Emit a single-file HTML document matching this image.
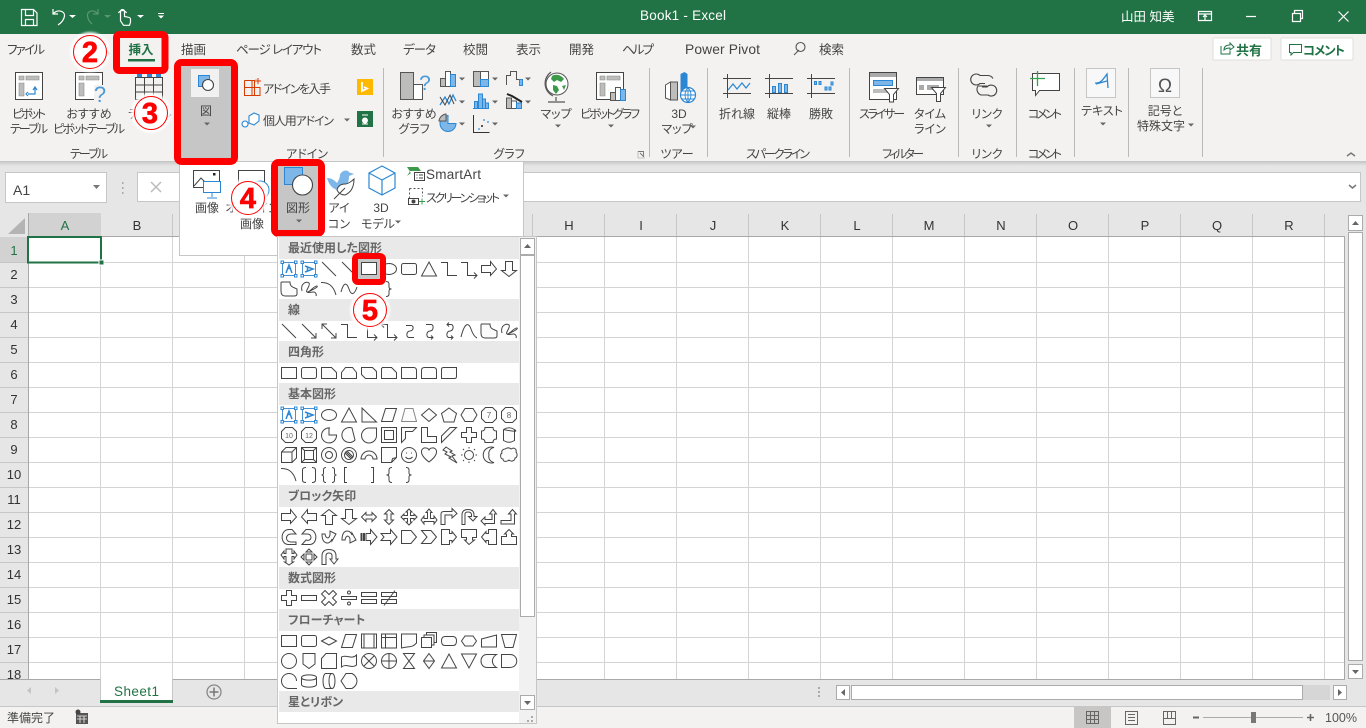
<!DOCTYPE html>
<html lang="ja"><head><meta charset="utf-8"><title>Book1 - Excel</title>
<style>
html,body{margin:0;padding:0;width:1366px;height:728px;overflow:hidden;background:#e6e6e6}
svg{display:block;font-family:"Liberation Sans","Noto Sans CJK JP",sans-serif;font-feature-settings:"palt"}
text{font-size:12px;fill:#444}
.m{text-anchor:middle}
.tab{font-size:12.5px}
.hd{font-size:12px;font-weight:bold;fill:#666}
.col{font-size:13px;fill:#333;text-anchor:middle}
.row{font-size:13px;fill:#333;text-anchor:middle}
.s path,.s use{fill:#fcfcfc;stroke:#444;stroke-width:1}
.n{fill:none!important}
.num{font-size:29px;font-weight:bold;fill:#f00;stroke:#f00;stroke-width:.7;text-anchor:middle}
</style></head><body>
<svg width="1366" height="728" viewBox="0 0 1366 728" xmlns="http://www.w3.org/2000/svg">
<defs>
<linearGradient id="sh" x1="0" y1="0" x2="0" y2="1"><stop offset="0" stop-color="#c4c4c4"/><stop offset="1" stop-color="#e6e6e6"/></linearGradient>
<filter id="gl" x="-30%" y="-30%" width="160%" height="160%"><feGaussianBlur stdDeviation="1"/></filter>
<path id="da" d="M-3-1.5h6l-3 3z" fill="#666"/>
<g id="tb"><path d="M-6.500-6.500h13v13h-13z" fill="#fff" stroke="#4a90d0"/><path d="M-8-8h2.500v2.500h-2.500zM5.500-8h2.500v2.500h-2.500zM-8 5.500h2.500v2.500h-2.500zM5.500 5.500h2.500v2.500h-2.500z" fill="#fff" stroke="#2b87d3"/><path d="M-3 4L0-4l3 8M-2-.5h4" fill="none" stroke="#2b87d3" stroke-width="1.500"/></g>
<g id="tv"><path d="M-6.500-6.500h13v13h-13z" fill="#fff" stroke="#4a90d0"/><path d="M-8-8h2.500v2.500h-2.500zM5.500-8h2.500v2.500h-2.500zM-8 5.500h2.500v2.500h-2.500zM5.500 5.500h2.500v2.500h-2.500z" fill="#fff" stroke="#2b87d3"/><path d="M-4-3L4 0-4 3M-1.500-2v4" fill="none" stroke="#2b87d3" stroke-width="1.500"/></g>
<path id="ln" d="M-7-7L7 7" fill="none"/>
<path id="la" d="M-7-7L7 7M2 7h5V2" fill="none"/>
<path id="ld" d="M-7-7L7 7M2 7h5V2M-2-7h-5v5" fill="none"/>
<path id="el" d="M-8-6.500h6.500v13H8" fill="none"/>
<path id="ea" d="M-8-6.500h6.500v13H8M5 3.500l3 3-3 3" fill="none"/>
<path id="ed" d="M-8-6.500h6.500v13H8M5 3.500l3 3-3 3M-5-9.500l-3 3 3 3" fill="none"/>
<path id="cc" d="M-3-5.500H2C5-5.500 5-.5 1 0-3 .5-3 6.500 0 6.500H5" fill="none"/>
<path id="ca" d="M-3-6.500H2C5-6.500 5-.5 1 0-3 .5-3 6.500 0 6.500H4M2 4.500l2 2-2 2" fill="none"/>
<path id="cd" d="M-2-6.500H2C5-6.500 5-.5 1 0-3 .5-3 6.500 0 6.500H4M2 4.500l2 2-2 2M0-8.500l-2 2 2 2" fill="none"/>
<path id="cv" d="M-8 6C-4-10 0-8 2-2S6 6 8 7" fill="none"/>
<path id="ff" d="M-7-7H1C1-2 4-2 8 0V5C8 7 6 7 5 7H-4C-7 7-8 5-8 2V-5C-8-7-8-7-7-7z"/>
<path id="sc" d="M-7 2C-9-6-2-8 0-6S-4 2-2 3 6-4 8-3 1 2-1 3 4 3 5 3 8 5 7 7" fill="none"/>
<path id="ar" d="M-8-6.500C-2-6.500 4-5 7 6" fill="none"/>
<path id="wv" d="M-8 3C-5-8-2-6 0 0S5 7 8-2" fill="none"/>
<path id="rc" d="M-7.500-5.500h15v11h-15z"/>
<path id="rr" d="M-5.500-5.500h11a2 2 0 0 1 2 2v7a2 2 0 0 1-2 2h-11a2 2 0 0 1-2-2v-7a2 2 0 0 1 2-2z"/>
<path id="s1" d="M-7.500-5.500h10l5 5v6h-15z"/>
<path id="s2" d="M-3.500-5.500h7l4 5v6h-15v-6z"/>
<path id="s3" d="M-7.500-5.500h11l4 4v7h-11l-4-4z"/>
<path id="s4" d="M-6.500-5.500h9l5 5v6h-15v-10z"/>
<path id="r1" d="M-7.500-5.500h12q3 0 3 3v8h-15z"/>
<path id="r2" d="M-4.500-5.500h9q3 0 3 3v8h-15v-8q0-3 3-3z"/>
<path id="r3" d="M-5.500-5.500h13v9q0 2-2 2h-13v-9q0-2 2-2z"/>
<ellipse id="ov" cx="0" cy="0" rx="7.500" ry="5.500"/>
<path id="tr" d="M0-7L7.500 7h-15z"/>
<path id="rt" d="M-7-7L7.500 7H-7z"/>
<path id="pa" d="M-3.500-6.500h11L3.500 6.500h-11z"/>
<path id="tz" d="M-4-6.500h8l3.500 13h-15z" style="stroke:#888"/>
<path id="di" d="M0-6.500L7.500 0 0 6.500-7.500 0z"/>
<path id="pe" d="M0-7L7.500-1.500 5 7H-5L-7.500-1.500z"/>
<path id="he" d="M-4-6.500h8L8 0 4 6.500h-8L-8 0z"/>
<path id="oc" d="M-3.500-7.500h7l4 4v7l-4 4h-7l-4-4v-7z"/>
<path id="pi" d="M1-7A7.500 7.500 0 1 0 7.500 0H0V-7z"/>
<path id="ch" d="M3-7A7.500 7.500 0 1 0 6 5z"/>
<path id="td" d="M0-7H7.500V0A7.500 7.500 0 1 1 0-7z"/>
<path id="fr" d="M-7.500-7.500h15v15h-15zM-4.500-4.500v9h9v-9z"/>
<path id="hf" d="M-7.500-7.500h15l-4 4h-7v7l-4 4z"/>
<path id="lo" d="M-7.500-7.500h6v9h9v6h-15z"/>
<path id="dg" d="M-7.500 1L1-7.500h6.500L-7.500 7.500z"/>
<path id="pl" d="M-2.500-7.500h5v5h5v5h-5v5h-5v-5h-5v-5h5z"/>
<path id="pq" d="M-4-7.500h8q0 3.500 3.500 3.500v8q-3.500 0-3.500 3.500h-8q0-3.500-3.500-3.500v-8q3.500 0 3.500-3.500z"/>
<path id="cn" d="M-5.500-5.500V5.500Q0 9 5.500 5.500V-5.500M-5.500-5.500Q0-9 5.500-5.500T-5.500-5.500"/>
<path id="cu" d="M-7.500-3L-3-7.500h10.500V3L3 7.500H-7.500zM-7.500-3H3V7.500M3-3L7.500-7.500"/>
<path id="bv" d="M-7.500-7.500h15v15h-15zM-4.500-4.500h9v9h-9zM-7.500-7.500l3 3M7.500-7.500l-3 3M-7.500 7.500l3-3M7.500 7.500l-3-3"/>
<path id="dn" d="M7.500 0A7.500 7.500 0 1 1-7.500 0 7.500 7.500 0 1 1 7.500 0zM3.500 0A3.500 3.500 0 1 0-3.500 0 3.500 3.500 0 1 0 3.500 0z"/>
<path id="ns" d="M7.500 0A7.500 7.500 0 1 1-7.500 0 7.500 7.500 0 1 1 7.500 0zM4.500 0A4.500 4.500 0 1 0-4.500 0 4.500 4.500 0 1 0 4.500 0zM-3-3L3 3M-2-4L4 2M-4-2L2 4"/>
<path id="ba" d="M-8 4A8 8 0 0 1 8 4H4A4 4 0 0 0-4 4z"/>
<path id="fc" d="M-7.500-7.500h15v10l-5 5h-10zM2.500 7.500l1-4 4-1"/>
<path id="sm" d="M7.500 0A7.500 7.500 0 1 1-7.500 0 7.500 7.500 0 1 1 7.500 0zM-3-2h1M2-2h1M-3.500 2Q0 5.500 3.500 2"/>
<path id="ht" d="M0 7C-12-2-7-8-3-7-1-7 0-5 0-5S1-7 3-7C7-8 12-2 0 7z"/>
<path id="lt" d="M-3-8L3-4 1-3l5 3-3 1 5 7-8-5 2-1-6-3 2-2-4-2z"/>
<path id="su" d="M4.500 0A4.500 4.500 0 1 1-4.500 0 4.500 4.500 0 1 1 4.500 0zM0-8v1.500M0 6.500V8M-8 0h1.500M6.500 0H8M-6-6l1 1M5 5l1 1M6-6L5-5M-5 5l-1 1"/>
<path id="mo" d="M5-7.500A8 8 0 1 0 5 7.500 6 6 0 0 1 0 0 6 6 0 0 1 5-7.500z"/>
<path id="cl" d="M-4-6C-1-8 1-7 2-6 5-8 8-6 7-3 9-1 8 3 6 3 6 6 2 7 0 5-2 7-6 7-6 4-9 4-9-1-7-2-8-4-6-6-4-6z"/>
<path id="bp" d="M-3-7.500Q-6.500-7.500-6.500-5V5Q-6.500 7.500-3 7.500M3-7.500Q6.500-7.500 6.500-5V5Q6.500 7.500 3 7.500" fill="none"/>
<path id="bc" d="M-3-7.500Q-5.500-7.500-5.500-5V-2Q-5.500 0-7.500 0-5.500 0-5.500 2V5Q-5.500 7.500-3 7.500M3-7.500Q5.500-7.500 5.500-5V-2Q5.500 0 7.500 0 5.500 0 5.500 2V5Q5.500 7.500 3 7.500" fill="none"/>
<path id="lb" d="M-2-7.500H-4.500V7.500H-2" fill="none"/>
<path id="rb" d="M2-7.500H4.500V7.500H2" fill="none"/>
<path id="lc" d="M3-7.500Q0-7.500 0-5V-2Q0 0-2.500 0 0 0 0 2V5Q0 7.500 3 7.500" fill="none"/>
<path id="rs" d="M-3-7.500Q0-7.500 0-5V-2Q0 0 2.500 0 0 0 0 2V5Q0 7.500-3 7.500" fill="none"/>
<path id="ax" d="M-7.500-3.500h9v-4L7.500 0l-6 6.500v-3h-9z"/>
<path id="al" d="M7.500-3.500h-9v-4L-7.500 0l6 6.500v-3h9z"/>
<path id="au" d="M-3.500 7.500v-9h-4L0-7.500l7.500 6h-4v9z"/>
<path id="ad" d="M-3.500-7.500h7v9h4L0 7.500l-7.500-6h4z"/>
<path id="lr" d="M-7.500 0L-3-4.500v2.500h6v-2.500L7.500 0 3 4.500V2h-6v2.500z"/>
<path id="ud" d="M0-7.500L4.500-3H2v6h2.500L0 7.500-4.500 3H-2v-6h-2.500z"/>
<path id="qa" d="M0-8L3-5H1.500v3.500H5V-3l3 3-3 3V1.500H1.500V5H3L0 8-3 5h1.500V1.500H-5V3L-8 0l3-3v1.500h3.500V-5H-3z"/>
<path id="lu" d="M0-8L3-4.500H1.500V1.500H5V-1L8 3 5 7V4.500H-5V7L-8 3l3-4V1.500h3.500v-6H-3z"/>
<path id="be" d="M-8 7.500V-3q0-2.500 3-2.500H3v-3L8-3.500 3 1V-2H-4V7.500z"/>
<path id="ut" d="M-7 7.500V-2q0-5.500 6-5.500 6 0 6 5.500v1.500h3L4 4-.5-.5h3V-2q0-3-3.500-3T-4-2v9.500z"/>
<path id="lf" d="M-8 4L-4 0v2.500H3V-3H.5L4-7.500 7.500-3H5.500V6.500H-4V8z"/>
<path id="bu" d="M-8 3.500H2V-3H-.5L3.500-7.500 7.500-3H5.500V7H-8z"/>
<path id="c1" d="M3-7.500H0C-9-7.500-9 7-1 7.500H7V5L2 5C-4 5-4-3 2-3H7z"/>
<path id="c2" d="M-3-7.500H0C9-7.500 9 7 1 7.500H-7L-3 3C3 5 4-3-2-3H-7z"/>
<path id="c3" d="M-7-3C-7 8 1 8 3 2V4L7-3 1-6V-2C0 2-3 2-4-3z"/>
<path id="c4" d="M-7 3C-7-8 1-8 3-2V-4L7 3 1 6V2C0-2-3-2-4 3z"/>
<path id="st" d="M-8-3.500h1v7h-1zM-5.500-3.500h1v7h-1zM-3-3.500H1.500v-4L8 0 1.500 7.500v-4H-3z"/>
<path id="no" d="M-8-3.500H1.500v-4L8 0 1.500 7.500v-4H-8L-5 0z"/>
<path id="pn" d="M-7.500-6.500H2L7.500 0 2 6.500H-7.500z"/>
<path id="cv2" d="M-7.500-6.500H2L7.500 0 2 6.500H-7.500L-2 0z"/>
<path id="rk" d="M-7.500-7.500h8v4H3v-2L7.500 0 3 5.500v-2H.5v4h-8z"/>
<path id="dk" d="M-7.500-7.500h15v8h-4V3h2L0 7.500-4.500 3h2V.5h-5z"/>
<path id="lk" d="M7.500-7.500h-8v4H-3v-2L-7.500 0-3 5.500v-2H-.5v4h8z"/>
<path id="uk" d="M-7.500 7.500v-8h5V-3h-2L0-7.500 4.500-3h-2V-.5h5v8z"/>
<path id="uc" d="M-3-8h6v4.500H5V-6L8-2 5 2V-.5H3V5H4.500L0 8-4.500 5H-3V-.5H-5V2L-8-2-5-6v2.500h2z"/>
<path id="qc" d="M-3-3h6v6h-6zM0-8l3 3H-3zM0 8l3-3H-3zM-8 0l3-3V3zM8 0L5-3V3z"/>
<path id="ci" d="M-7 7.500V-1q0-6.500 7-6.500T7-1V2h2L5 7 1 2h2V-1q0-3-3-3t-3 3v8.500z"/>
<path id="mn" d="M-7.500-2.500h15v5h-15z"/>
<path id="mx" d="M-4-7.500L0-3.500 4-7.500 7.500-4 3.500 0 7.500 4 4 7.500 0 3.500-4 7.500-7.500 4-3.500 0-7.500-4z"/>
<path id="dv" d="M-7.500-1.500h15v3h-15zM1.500-5.500a1.500 1.500 0 1 1-3 0 1.500 1.500 0 1 1 3 0zM1.500 5.500a1.500 1.500 0 1 1-3 0 1.500 1.500 0 1 1 3 0z"/>
<path id="eq" d="M-7.500-5.500h15v4h-15zM-7.500 1.500h15v4h-15z"/>
<path id="ne" d="M-7.500-5.500h15v4h-15zM-7.500 1.500h15v4h-15zM-5 7.500L6-7.500"/>
<path id="fp" d="M-7.500-5.500h15v11h-15z"/>
<path id="fd" d="M-7.500 0L0-4 7.500 0 0 4z"/>
<path id="fq" d="M-7.500-7h15v14h-15zM-5-7V7M5-7V7"/>
<path id="fi" d="M-7.500-7h15v14h-15zM-7.500-3.500h15M-3.500-7V7"/>
<path id="fo" d="M-7.500-7h15V2C3 7 1 5-7.500 7z"/>
<path id="fm" d="M-7.500-3.500h10v10h-10zM-5-3.500V-6H5V4H2.500M-2.500-6V-8.500h10v10H5"/>
<path id="fe" d="M-4-4.500h8q3.500 0 3.500 4.500T4 4.500h-8q-3.500 0-3.500-4.500T-4-4.500z"/>
<path id="fh" d="M-4-5h8L7.500 0 4 5h-8L-7.500 0z"/>
<path id="fn" d="M-7.500-2L7.500-6V6h-15z"/>
<path id="fu" d="M-7.500-6.500h15L4 6.500h-8z"/>
<path id="fc2" d="M7.500 0A7.500 7.500 0 1 1-7.500 0 7.500 7.500 0 1 1 7.500 0z"/>
<path id="fs" d="M-6-7.500H6V3L0 7.500-6 3z"/>
<path id="fk" d="M-3-7.500h10.500v15h-15v-10z"/>
<path id="ft" d="M-7.500-4C-3-7 3-1 7.500-6V4C3 8-3 2-7.500 6z"/>
<path id="fx" d="M7.500 0A7.500 7.500 0 1 1-7.500 0 7.500 7.500 0 1 1 7.500 0zM-5-5L5 5M5-5L-5 5"/>
<path id="fy" d="M7.500 0A7.500 7.500 0 1 1-7.500 0 7.500 7.500 0 1 1 7.500 0zM-7.500 0h15M0-7.500v15"/>
<path id="fa" d="M-5.500-7.500h11L-5.500 7.500h11z"/>
<path id="fb" d="M0-7.500L5.500 0 0 7.500-5.500 0zM-5.500 0h11"/>
<path id="fw" d="M-7.500 7L0-7 7.500 7z"/>
<path id="fv" d="M-7.500-7L0 7 7.500-7z"/>
<path id="fl" d="M7.500-6.500H-2C-10-6.500-10 6.500-2 6.500H7.500C2 3 2-3 7.500-6.500z"/>
<path id="fg" d="M-7.500-6.500H1C10-6.500 10 6.500 1 6.500H-7.500z"/>
<path id="fj" d="M7.500 0A7.500 7.500 0 1 0 0 7.500H8"/>
<path id="fz" d="M-7.500-3.500C-7.500-7 7.500-7 7.500-3.500V3.500C7.500 7-7.500 7-7.500 3.500zM-7.500-3.500C-7.500 0 7.500 0 7.500-3.500"/>
<path id="f3" d="M-3-7.500H3C7-7.500 7 7.500 3 7.500H-3C-7 7.500-7-7.500-3-7.500zM3-7.500C-1-7.500-1 7.500 3 7.500"/>
<path id="f4" d="M-3-7.500H3C6-6 8-3 8 0S6 6 3 7.500H-3L-8 0z"/>
</defs>

<!-- base -->
<rect width="1366" height="728" fill="#e6e6e6"/>
<rect width="1366" height="34" fill="#217346"/>
<rect y="34" width="1366" height="127" fill="#f3f2f1"/>
<rect y="161" width="1366" height="5" fill="url(#sh)"/>

<!-- title bar -->
<g fill="none" stroke="#fff" stroke-width="1.200">
<path d="M21.500 9.500h12l3.500 3.500v12.500h-15.500z"/><path d="M25.500 9.500v6h8v-6M25.500 25.500v-6h8v6" />
<path d="M53 9v5h5M53.500 13.500C58 9 65 11 64.500 16 64 20 61 23 58 25"/>
<path d="M98 9v5h-5M97.500 13.500C93 9 87 11 87.500 16 88 20 90 22 92 24" stroke="#5d9576"/>
<path d="M120.500 20v-8.500a2 2 0 0 1 4 0v5l4 .8a2 2 0 0 1 2 2v3l-1 3h-6l-3-4.500zM118.500 13a4.500 4.500 0 0 1 8 0"/>
<path d="M1198.500 11.500h13v9h-13zM1198.500 14h13M1205 20v-4M1203 17l2-2 2 2"/>
<path d="M1246 16.500h10M1292.500 13.500h8v8h-8zM1294.500 13v-2.500h8v8H1301"/>
<path d="M1338.500 11.500l10 10M1348.500 11.500l-10 10"/>
</g>
<g fill="#fff"><path d="M69 15h7l-3.500 3zM137 15h7l-3.500 3zM158 13h6v1h-6zM158 15.500h6l-3 3z"/></g><path d="M104 15h7l-3.500 3z" fill="#5d9576"/>
<text x="640" y="20" style="fill:#fff;font-size:13.500px" textLength="86">Book1 - Excel</text>
<text x="1121" y="21" style="fill:#fff;font-size:12.500px">山田 知美</text>

<!-- tabs -->
<g class="tab">
<text x="7" y="54" class="tab" textLength="38">ファイル</text><text x="72" y="54" class="tab" textLength="38">ホーム</text>
<text x="141" y="54" class="tab m" style="font-weight:bold;fill:#217346">挿入</text>
<text x="181" y="54" class="tab">描画</text><text x="236" y="54" class="tab" textLength="86">ページ レイアウト</text>
<text x="351" y="54" class="tab">数式</text><text x="403" y="54" class="tab" textLength="33">データ</text><text x="463" y="54" class="tab">校閲</text><text x="516" y="54" class="tab">表示</text><text x="569" y="54" class="tab">開発</text><text x="622" y="54" class="tab" textLength="32">ヘルプ</text>
<text x="685" y="54" class="tab" style="font-size:13.800px" textLength="75">Power Pivot</text><text x="819" y="54" class="tab">検索</text>
</g>
<path d="M128 59h27v2.500h-27z" fill="#217346"/>
<path d="M794 54l5-5M805 46a4.500 4.500 0 1 1-9 0 4.500 4.500 0 1 1 9 0z" fill="none" stroke="#555" stroke-width="1.100" transform="translate(0 1)"/>
<!-- share buttons -->
<rect x="1213" y="38" width="58" height="22" rx="1" fill="#fff" stroke="#e1dfdd"/>
<rect x="1281" y="38" width="72" height="22" rx="1" fill="#fff" stroke="#e1dfdd"/>
<path d="M1221 46v8h9v-3M1224 50c0-4 3-5 6-5v-2l4 4-4 3v-2c-3 0-5 1-6 2z" fill="none" stroke="#217346"/>
<path d="M1289.500 44.500h12v8h-8l-2.500 2.500v-2.500h-1.500z" fill="none" stroke="#217346"/>
<text x="1236" y="55" style="font-size:13px;font-weight:bold;fill:#217346">共有</text>
<text x="1303" y="55" style="font-size:12.500px;font-weight:bold;fill:#217346" textLength="42">コメント</text>

<!-- separators -->
<path d="M383.500 68v89M649.500 68v89M707.500 68v89M849.500 68v89M958.500 68v89M1016.500 68v89M1074.500 68v89M1128.500 68v89M1202.500 68v89" stroke="#b9b9b9"/>

<!-- ribbon: table -->
<g fill="none" stroke="#444">
<path d="M15.500 72.500h27v27h-27z" fill="#fff"/>
<path d="M75.500 72.500h27v27h-27z" fill="#fff"/>
<path d="M135.500 77.500h27v22h-27zM135.500 85h27M135.500 92h27M144.500 77v22M153.500 77v22"/>
</g>
<path d="M19 76h5v4h-5zM26 76h13v4H26zM19 83h5v13h-5zM79 76h5v4h-5zM86 76h13v4H86zM79 83h5v13h-5z" fill="#bdbdbb" stroke="#8a8a8a" stroke-width=".6"/>
<path d="M28 94h7v-6M33 90l2-3 2 3M28 92l-2 2 2 2" fill="none" stroke="#2b87d3" stroke-width="1.200"/>
<rect x="94" y="85" width="12" height="18" fill="#f3f2f1"/>
<text x="100" y="102" style="font-size:22px;fill:#4a9ad8" class="m">?</text>
<path d="M137 74h5v3h-5zM147 74h5v3h-5zM156 74h5v3h-5z" fill="#2b87d3"/>
<text x="29" y="118" class="m" textLength="34">ピボット</text><text x="29" y="133" class="m" textLength="38">テーブル</text>
<text x="89" y="118" class="m">おすすめ</text><text x="89" y="133" class="m" textLength="72">ピボットテーブル</text>
<text x="150" y="118" class="m">テーブル</text>
<text x="89" y="158" class="m" textLength="38">テーブル</text>

<!-- addins -->
<path d="M244.500 87.500h15.500v8h-15.500zM244.500 80.500h10v15M244.500 80.500v7M252 80.500v15M256 80v-.5" fill="none" stroke="#d83b01"/>
<path d="M255 81h6M258 78v6" stroke="#d83b01" fill="none"/>
<text x="263" y="93" textLength="68">アドインを入手</text>
<rect x="357" y="79" width="16" height="16" fill="#ffb900"/><path d="M362 82v9l5-2.500-3-1.500" fill="none" stroke="#fff" stroke-width="1.800"/>
<path d="M249 116l5-3 5 2v6l-5 4-5-2zM245 121a3 3 0 1 0 .1 0z" fill="#fff" stroke="#2b87d3" stroke-width="1.100"/>
<text x="263" y="125" textLength="71">個人用アドイン</text><use href="#da" x="347" y="120"/>
<rect x="357" y="111" width="16" height="16" fill="#217346"/><path d="M362 115h6M365 118a2.500 2.500 0 1 1-.1 0zM362 124h6" stroke="#fff" fill="#fff"/>
<text x="307" y="158" class="m">アドイン</text>

<!-- charts -->
<path d="M400.500 72.500h13v27h-13z" fill="#bdbdbb" stroke="#555"/><path d="M413.500 84.500h9v15h-9z" fill="#fff" stroke="#555"/>
<text x="425" y="90" class="m" style="font-size:21px;fill:#4a9ad8">?</text>
<text x="414" y="118" class="m">おすすめ</text><text x="414" y="133" class="m">グラフ</text>
<g stroke="#555" stroke-width="1">
<path d="M440.500 78.500h5v8h-5z" fill="#bdbdbb"/><path d="M445.500 71.500h5v15h-5z" fill="#fff"/><path d="M450.500 74.500h5v12h-5z" fill="#7db6e8" stroke="#2b87d3"/>
<path d="M473.500 71.500h7v15h-7z" fill="#bdbdbb"/><path d="M480.500 71.500h8v8h-8z" fill="#fff"/><path d="M480.500 79.500h8v7h-8z" fill="#7db6e8" stroke="#2b87d3"/>
<path d="M506.500 85V75.500h4V71.500h6v8h3" fill="none"/><path d="M519.500 79.500h3v6h-3z" fill="#7db6e8" stroke="#2b87d3"/>
<path d="M440 105l5-8 4 7 4-9 3 6" fill="none" stroke="#2b87d3" stroke-width="1.300"/><path d="M440 97l5 8 5-10 4 9" fill="none" stroke="#444"/>
<path d="M474.500 108.500v-7h3v7zM477.500 108.500v-7M478.500 108V94h4v14M482.500 108v-9h3v9M485.500 108v-5h3v5" fill="#7db6e8" stroke="#2b87d3"/><path d="M473 108.500h16" stroke="#2b87d3"/>
<path d="M506.500 108.500V98h5v10.500z" fill="#bdbdbb"/><path d="M511.500 108.500V101h5v7.500z" fill="#fff"/><path d="M516.500 108.500V103h5v5.500z" fill="#7db6e8" stroke="#2b87d3"/><path d="M507 94l5 2 5 3 5 3" stroke="#222" stroke-width="2" fill="none"/>
<path d="M448 115.500a8 8 0 1 0 8 8h-8z" fill="#7db6e8" stroke="#2b87d3"/><path d="M446 114a8 8 0 0 0-7 7h7z" fill="#bdbdbb"/>
<path d="M473.500 115v17.500h16" fill="none" stroke="#333"/></g>
<path d="M483 119h2v2h-2zM487 121h2v2h-2zM478 128h2v2h-2z" fill="#7db6e8"/><path d="M481 125h2v2h-2z" fill="#555"/>
<use href="#da" x="462" y="79"/><use href="#da" x="495" y="79"/><use href="#da" x="528" y="79"/><use href="#da" x="462" y="102"/><use href="#da" x="495" y="102"/><use href="#da" x="528" y="102"/><use href="#da" x="462" y="124"/><use href="#da" x="495" y="124"/>
<circle cx="557" cy="84" r="11" fill="#fff" stroke="#555"/><path d="M552 76c5-3 10 0 12 3l-3 3-4-2-3 2-3-3zM553 85l4 1 2 4-3 4-3-4zM562 86l4-1-2 5z" fill="#3c9a4a"/>
<path d="M551 72a14 14 0 0 0 2 24M556 97v4M548 102h17" fill="none" stroke="#555" stroke-width="1.200"/>
<text x="556" y="118" class="m">マップ</text><use href="#da" x="558" y="126"/>
<path d="M596.500 72.500h27v27h-27z" fill="#fff" stroke="#444"/><path d="M600 76h5v4h-5zM607 76h13v4h-13zM600 83h5v13h-5z" fill="#bdbdbb" stroke="#888" stroke-width=".6"/>
<path d="M610.500 92.500h5v8h-5z" fill="#bdbdbb" stroke="#555"/><path d="M615.500 87.500h5v13h-5z" fill="#fff" stroke="#555"/><path d="M620.500 89.500h5v11h-5z" fill="#7db6e8" stroke="#2b87d3"/>
<text x="610" y="118" class="m" textLength="60">ピボットグラフ</text><use href="#da" x="611" y="126"/>
<text x="509" y="158" class="m">グラフ</text>
<path d="M638 151.500h5.500v5M640 153l4 4" fill="none" stroke="#777" stroke-width=".9"/><path d="M638 151v7h7" fill="none" stroke="#999" stroke-width=".6"/>

<!-- 3D map -->
<path d="M665.500 85l5-3v18l-5-2z" fill="#fff" stroke="#555"/><path d="M670.500 82h7v18h-7z" fill="#bdbdbb" stroke="#555"/><path d="M680.500 74l4-2 3 2v21h-7z" fill="#2b87d3"/>
<circle cx="688" cy="95" r="7.500" fill="#fff" stroke="#2b87d3" stroke-width="1.200"/><path d="M680.500 95h15M688 87.500v15M682 91h12M682 99h12M688 87.500a11 11 0 0 0 0 15a11 11 0 0 0 0-15" fill="none" stroke="#2b87d3" stroke-width=".9"/>
<text x="679" y="118" class="m">3D</text><text x="677" y="133" class="m">マップ</text><use href="#da" x="693" y="127"/>
<text x="677" y="158" class="m">ツアー</text>

<!-- sparklines -->
<g fill="none" stroke="#444"><path d="M723 78.500h28M723 93.500h28M727.500 74v24M765 78.500h28M765 93.500h28M769.500 74v24M807 78.500h28M807 93.500h28M811.500 74v24"/></g>
<path d="M728 90l5-6 4 5 5-6 4 5 4-5" fill="none" stroke="#2b87d3" stroke-width="1.200"/>
<path d="M772.500 86.500h3v6h-3zM778.500 83.500h3v9h-3zM784.500 84.500h3v8h-3z" fill="#7db6e8" stroke="#2b87d3"/>
<path d="M814.500 81.500h2v3h-2zM819 81.500h2v3h-2zM825 87h2v3h-2zM829 87h2v3h-2zM831 82h2v3h-2z" fill="#7db6e8" stroke="#2b87d3"/>
<text x="737" y="118" class="m">折れ線</text><text x="779" y="118" class="m">縦棒</text><text x="821" y="118" class="m">勝敗</text>
<text x="778" y="158" class="m" textLength="64">スパークライン</text>

<!-- slicers -->
<path d="M869.500 72.500h27v27h-27z" fill="#fff" stroke="#444"/><path d="M870 73h26v4h-26z" fill="#aaa"/><path d="M873.500 80.500h19v5h-19z" fill="#7db6e8" stroke="#2b87d3"/><path d="M873 89h15v4h-15z" fill="#bdbdbb"/>
<path d="M884.500 88.500h14l-5 6v7.500h-4v-7.500z" fill="#fff" stroke="#444"/>
<path d="M916.500 77.500h27v17h-27z" fill="#fff" stroke="#444"/><path d="M917 78h26v3h-26zM919 85h5v5h-5zM927 85h12v5h-12z" fill="#aaa"/>
<path d="M931.500 87.500h14l-5 6v8h-4v-8z" fill="#fff" stroke="#444"/>
<text x="882" y="118" class="m" textLength="46">スライサー</text><text x="930" y="118" class="m">タイム</text><text x="930" y="133" class="m">ライン</text>
<text x="903" y="158" class="m" textLength="42">フィルター</text>

<!-- link / comment -->
<path d="M985 84.500h-5a5.500 5.500 0 1 1 0-8h8a6 6 0 0 1 5 3M982 88h5a5.500 5.500 0 1 1 1 8h-7a6 6 0 0 1-3-9h9" fill="none" stroke="#444" stroke-width="1.100" transform="translate(0 -1)"/>
<text x="987" y="118" class="m">リンク</text><use href="#da" x="989" y="126"/><text x="987" y="158" class="m">リンク</text>
<path d="M1032.500 73.500h27v17h-20l-4 5v-5h-3z" fill="#fff" stroke="#444"/><path d="M1030 78.500h15M1037.500 71v15" stroke="#33a34d" stroke-width="1.300"/>
<text x="1045" y="118" class="m" textLength="34">コメント</text><text x="1045" y="158" class="m" textLength="34">コメント</text>
<path d="M1086.500 68.500h29v29h-29zM1150.500 68.500h29v29h-29z" fill="#f8f8f8" stroke="#c6c6c6"/>
<path d="M1096 84l11-3M1095 83c6 1 9-5 12-9l1 14" fill="none" stroke="#2b87d3" stroke-width="1.300"/>
<text x="1165" y="92" class="m" style="font-size:19px;fill:#555">Ω</text>
<text x="1102" y="115" class="m">テキスト</text><use href="#da" x="1103" y="124"/>
<text x="1165" y="115" class="m">記号と</text><text x="1161" y="130" class="m">特殊文字</text><use href="#da" x="1191" y="125"/>
<path d="M1347 156l4-3 4 3" fill="none" stroke="#777" stroke-width="1.500"/>

<!-- formula bar -->
<rect x="5.500" y="172.500" width="101" height="30" fill="#fff" stroke="#c6c6c6"/>
<text x="13" y="195" style="font-size:14px;fill:#444">A1</text><path d="M93 185h7l-3.500 4z" fill="#777"/>
<path d="M122 182h1.500v2H122zM122 187h1.500v2H122zM122 192h1.500v2H122z" fill="#aaa"/>
<rect x="137.500" y="172.500" width="1223" height="29" fill="#fff" stroke="#c6c6c6"/>
<path d="M151 182l10 10M161 182l-10 10" stroke="#bbb" stroke-width="1.500"/>
<path d="M1349 185l3.500 3 3.500-3" fill="none" stroke="#777" stroke-width="1.500"/>

<!-- grid -->
<rect x="28" y="237" width="1317" height="442" fill="#fff"/>
<path d="M100.500 214v465M172.500 237v442M244.500 237v442M316.500 237v442M388.500 237v442M460.500 237v442M532.500 237v442M604.500 237v442M676.500 237v442M748.500 237v442M820.500 237v442M892.500 237v442M964.500 237v442M1036.500 237v442M1108.500 237v442M1180.500 237v442M1252.500 237v442M1324.500 237v442" stroke="#d4d4d4"/>
<path d="M28 262.500h1317M28 287.500h1317M28 312.500h1317M28 337.500h1317M28 362.500h1317M28 387.500h1317M28 412.500h1317M28 437.500h1317M28 462.500h1317M28 487.500h1317M28 512.500h1317M28 537.500h1317M28 562.500h1317M28 587.500h1317M28 612.500h1317M28 637.500h1317M28 662.500h1317" stroke="#d4d4d4"/>
<!-- headers -->
<rect x="28" y="213" width="73" height="24" fill="#d2d2d2"/><rect x="0" y="237" width="28" height="25" fill="#d2d2d2"/>
<path d="M172.500 214v22M244.500 214v22M316.500 214v22M388.500 214v22M460.500 214v22M532.500 214v22M604.500 214v22M676.500 214v22M748.500 214v22M820.500 214v22M892.500 214v22M964.500 214v22M1036.500 214v22M1108.500 214v22M1180.500 214v22M1252.500 214v22M1324.500 214v22" stroke="#c6c6c6"/>
<path d="M0 262.500h28M0 287.500h28M0 312.500h28M0 337.500h28M0 362.500h28M0 387.500h28M0 412.500h28M0 437.500h28M0 462.500h28M0 487.500h28M0 512.500h28M0 537.500h28M0 562.500h28M0 587.500h28M0 612.500h28M0 637.500h28M0 662.500h28" stroke="#c6c6c6"/>
<path d="M28.500 213v466M28 236.500h1317M1344.500 237v443M0 679.500h1345" stroke="#a8a8a8" fill="none"/>
<path d="M8 234l17-16v16z" fill="#b4b4b4"/>
<text x="65" y="230" class="col" style="fill:#217346">A</text><text x="137" y="230" class="col">B</text><text x="209" y="230" class="col">C</text><text x="281" y="230" class="col">D</text><text x="353" y="230" class="col">E</text><text x="425" y="230" class="col">F</text><text x="497" y="230" class="col">G</text><text x="569" y="230" class="col">H</text><text x="641" y="230" class="col">I</text><text x="713" y="230" class="col">J</text><text x="785" y="230" class="col">K</text><text x="857" y="230" class="col">L</text><text x="929" y="230" class="col">M</text><text x="1001" y="230" class="col">N</text><text x="1073" y="230" class="col">O</text><text x="1145" y="230" class="col">P</text><text x="1217" y="230" class="col">Q</text><text x="1289" y="230" class="col">R</text>
<text x="14" y="255" class="row" style="fill:#217346">1</text><text x="14" y="279" class="row">2</text><text x="14" y="304" class="row">3</text><text x="14" y="329" class="row">4</text><text x="14" y="354" class="row">5</text><text x="14" y="379" class="row">6</text><text x="14" y="404" class="row">7</text><text x="14" y="429" class="row">8</text><text x="14" y="454" class="row">9</text><text x="14" y="479" class="row">10</text><text x="14" y="504" class="row">11</text><text x="14" y="529" class="row">12</text><text x="14" y="554" class="row">13</text><text x="14" y="579" class="row">14</text><text x="14" y="604" class="row">15</text><text x="14" y="629" class="row">16</text><text x="14" y="654" class="row">17</text><text x="14" y="679" class="row">18</text>
<rect x="0" y="679" width="1345" height="27" fill="#e6e6e6"/>
<path d="M0 679.500h100M173 679.500h1172" stroke="#a8a8a8"/>
<rect x="28" y="237" width="73" height="25.500" fill="none" stroke="#217346" stroke-width="2"/>
<rect x="99" y="260" width="5" height="5" fill="#217346" stroke="#fff"/>

<!-- v scrollbar -->
<rect x="1345" y="206" width="21" height="500" fill="#e6e6e6"/>
<rect x="1348.500" y="215.500" width="14" height="15" fill="#fff" stroke="#ababab"/><path d="M1352 225l3.500-4 3.500 4z" fill="#666"/>
<rect x="1348.500" y="232.500" width="14" height="428" fill="#fff" stroke="#ababab"/>
<rect x="1348.500" y="664.500" width="14" height="14" fill="#fff" stroke="#ababab"/><path d="M1352 670h7l-3.500 4z" fill="#666"/>

<!-- sheet tabs -->
<path d="M100.500 679v22h72v-22" fill="#fff" stroke="#c6c6c6"/><rect x="100" y="700" width="73" height="3" fill="#217346"/>
<text x="114" y="696" style="font-size:13.500px;fill:#217346" textLength="45">Sheet1</text>
<path d="M31 687v7l-4-3.500zM55 687v7l4-3.500z" fill="#c4c4c4"/>
<circle cx="214" cy="692" r="7" fill="none" stroke="#888" stroke-width="1.300"/><path d="M209.500 692h9M214 687.500v9" stroke="#777" stroke-width="1.500"/>
<path d="M818 687h2v2h-2zM818 691h2v2h-2zM818 695h2v2h-2z" fill="#aaa"/>
<rect x="836.500" y="685.500" width="13" height="14" fill="#fff" stroke="#ababab"/><path d="M845 689v7l-4-3.500z" fill="#666"/>
<rect x="851.500" y="685.500" width="451" height="14" fill="#fff" stroke="#ababab"/><rect x="1303" y="685" width="27" height="15" fill="#d6d6d6"/>
<rect x="1333.500" y="685.500" width="13" height="14" fill="#fff" stroke="#ababab"/><path d="M1338 689v7l4-3.500z" fill="#666"/>

<!-- status bar -->
<rect y="706" width="1366" height="22" fill="#f3f2f1"/><path d="M0 706.500h1366" stroke="#c6c6c6"/>
<text x="7" y="722">準備完了</text>
<path d="M76 713h12v11H76z" fill="#555"/><path d="M77 716h10M80 716v7M84 716v7M77 719h10" stroke="#f3f2f1" stroke-width=".8" fill="none"/><circle cx="78" cy="712" r="2.500" fill="#444"/>
<rect x="1074" y="707" width="37" height="21" fill="#c8c6c4"/>
<path d="M1086.500 711.500h12v12h-12zM1086.500 715.500h12M1086.500 719.500h12M1090.500 711.500v12M1094.500 711.500v12" fill="none" stroke="#666"/>
<path d="M1125.500 711.500h12v13h-12zM1128 714.500h7M1128 717.500h7M1128 720.500h7" fill="none" stroke="#666"/>
<path d="M1163.500 711.500h12v13h-12zM1163.500 718.500h12M1167.500 711.500v7M1171.500 711.500v7" fill="none" stroke="#666"/>
<path d="M1193 717.500h6" stroke="#666" stroke-width="2"/><path d="M1203 717.500h100" stroke="#aaa"/><rect x="1251" y="712" width="5" height="11" fill="#777"/><path d="M1307 717.500h7M1310.500 714v7" stroke="#666" stroke-width="1.600"/>
<text x="1325" y="722" style="font-size:12.500px;fill:#555">100%</text>

<!-- insert popup -->
<rect x="179.500" y="161.500" width="344" height="94" fill="#fff" stroke="#c6c6c6"/>
<path d="M193.500 170.500h26v17h-26z" fill="#fff" stroke="#444"/><path d="M194 186l7-8 7 7" fill="none" stroke="#444"/><rect x="213" y="173" width="2.500" height="2.500" fill="#222"/>
<path d="M203.500 181.500h17v11h-17z" fill="#fff" stroke="#2b87d3"/><path d="M212 193v4M207 198h10" stroke="#2b87d3"/>
<text x="207" y="212" class="m">画像</text>
<path d="M238.500 170.500h26v17h-26z" fill="#fff" stroke="#444"/><circle cx="260" cy="190" r="9" fill="#fff" stroke="#2b87d3"/>
<text x="252" y="212" class="m">オンライン</text><text x="252" y="228" class="m">画像</text>
<!-- icon, 3D etc -->
<path d="M327 178c5 0 8 3 10 5 2-3 3-6 3-8s4-6 8-4c1 2 4 2 6 3l-5 2c0 8-3 13-10 14-6 0-10-5-12-12z" fill="#7db6e8"/>
<path d="M345 184c3 0 7-3 9-5 0 6-2 13-9 16-5 0-7-3-8-5 1-4 4-6 8-6zM334 199l11-11" fill="#fff" stroke="#444"/>
<text x="339" y="212" class="m">アイ</text><text x="339" y="228" class="m">コン</text>
<path d="M382 166l13 7v15l-13 7-13-7v-15zM369 173l13 7 13-7M382 180v15" fill="#fff" stroke="#2b87d3" stroke-width="1.200"/>
<text x="381" y="212" class="m">3D</text><text x="378" y="228" class="m">モデル</text><use href="#da" x="398" y="222"/>
<path d="M407 167h11l3 4h-3l-9 0 2 2-4 3 3-4.500z" fill="#3c9a4a"/><path d="M414.500 172.500h10v8h-10zM416.500 175h1M419 175h4M416.500 178h1M419 178h4" fill="#fff" stroke="#444"/>
<text x="426" y="179" style="font-size:13.500px" textLength="55">SmartArt</text>
<path d="M409.500 188.500h13v8M409.500 188.500v10" fill="none" stroke="#555" stroke-dasharray="2 2"/><path d="M408.500 198.500h10v6h-10z" fill="#fff" stroke="#444"/><circle cx="413.500" cy="201.500" r="2" fill="#444"/><path d="M419 201.500h6M422 198.500v6" stroke="#33a34d"/>
<text x="426" y="202" style="font-size:12px" textLength="74">スクリーンショット</text><use href="#da" x="506" y="196"/>

<!-- callout boxes -->
<rect x="181" y="66" width="50" height="92" fill="#c6c6c6"/>
<rect x="191" y="69" width="28" height="28" fill="#f1f1f1"/>
<path d="M198.500 75.500h11v11h-11z" fill="#7db6e8" stroke="#2b87d3"/><circle cx="208" cy="85" r="5.500" fill="#fff" stroke="#444" stroke-width="1.100"/>
<text x="206" y="115" class="m">図</text><use href="#da" x="207" y="124"/>
<rect x="177.500" y="62.500" width="57" height="99" rx="4" fill="none" stroke="#f00" stroke-width="7"/>
<rect x="278" y="166" width="41" height="65" fill="#c6c6c6"/>
<path d="M284.500 167.500h18v17h-18z" fill="#7db6e8" stroke="#2b87d3"/><circle cx="302.500" cy="185" r="10" fill="#fff" stroke="#444" stroke-width="1.100"/>
<text x="298" y="212" class="m">図形</text><use href="#da" x="299" y="221"/>
<rect x="274.500" y="162.500" width="47" height="71" rx="4" fill="none" stroke="#f00" stroke-width="7"/>

<!-- shapes menu -->
<rect x="277.500" y="236.500" width="259" height="487" fill="#fff" stroke="#c6c6c6"/>
<rect x="519" y="237" width="17" height="486" fill="#f1f1f1"/>
<rect x="520.500" y="238.500" width="14" height="16" fill="#fff" stroke="#ababab"/><path d="M524 248l3.500-4 3.500 4z" fill="#666"/>
<rect x="520.500" y="255.500" width="14" height="361" fill="#fff" stroke="#ababab"/>
<rect x="520.500" y="695.500" width="14" height="14" fill="#fff" stroke="#ababab"/><path d="M524 701h7l-3.500 4z" fill="#666"/>
<path d="M531 716h2v2h-2zM527 720h2v2h-2zM531 720h2v2h-2z" fill="#aaa"/>
<path d="M279 237h240v22H279zM279 299h240v22H279zM279 341h240v22H279zM279 383h240v22H279zM279 485h240v22H279zM279 567h240v22H279zM279 609h240v22H279zM279 691h240v21H279z" fill="#e9e9e9"/>
<text x="288" y="252" class="hd">最近使用した図形</text><text x="288" y="314" class="hd">線</text><text x="288" y="356" class="hd">四角形</text><text x="288" y="398" class="hd">基本図形</text><text x="288" y="500" class="hd">ブロック矢印</text><text x="288" y="582" class="hd">数式図形</text><text x="288" y="624" class="hd">フローチャート</text><text x="288" y="706" class="hd">星とリボン</text>

<g class="s">
<use href="#tb" x="289" y="269" style="stroke:none"/><use href="#tv" x="309" y="269" style="stroke:none"/><use href="#ln" x="329" y="269"/><use href="#ln" x="349" y="269"/><use href="#ov" x="389" y="269"/><use href="#rr" x="409" y="269"/><use href="#tr" x="429" y="269"/><use href="#el" x="449" y="269"/><use href="#ea" x="469" y="269"/><use href="#ax" x="489" y="269"/><use href="#ad" x="509" y="269"/>
<use href="#ff" x="289" y="289"/><use href="#sc" x="309" y="289"/><use href="#ar" x="329" y="289"/><use href="#wv" x="349" y="289"/><use href="#rs" x="389" y="289"/>
<use href="#ln" x="289" y="331"/><use href="#la" x="309" y="331"/><use href="#ld" x="329" y="331"/><use href="#el" x="349" y="331"/><use href="#ea" x="369" y="331"/><use href="#ed" x="389" y="331"/><use href="#cc" x="409" y="331"/><use href="#ca" x="429" y="331"/><use href="#cd" x="449" y="331"/><use href="#cv" x="469" y="331"/><use href="#ff" x="489" y="331"/><use href="#sc" x="509" y="331"/>
<use href="#rc" x="289" y="373"/><use href="#rr" x="309" y="373"/><use href="#s1" x="329" y="373"/><use href="#s2" x="349" y="373"/><use href="#s3" x="369" y="373"/><use href="#s4" x="389" y="373"/><use href="#r1" x="409" y="373"/><use href="#r2" x="429" y="373"/><use href="#r3" x="449" y="373"/>
<use href="#tb" x="289" y="415" style="stroke:none"/><use href="#tv" x="309" y="415" style="stroke:none"/><use href="#ov" x="329" y="415"/><use href="#tr" x="349" y="415"/><use href="#rt" x="369" y="415"/><use href="#pa" x="389" y="415"/><use href="#tz" x="409" y="415"/><use href="#di" x="429" y="415"/><use href="#pe" x="449" y="415"/><use href="#he" x="469" y="415"/><use href="#oc" x="489" y="415"/><use href="#oc" x="509" y="415"/>
<use href="#oc" x="289" y="435"/><use href="#oc" x="309" y="435"/><use href="#pi" x="329" y="435"/><use href="#ch" x="349" y="435"/><use href="#td" x="369" y="435"/><use href="#fr" x="389" y="435"/><use href="#hf" x="409" y="435"/><use href="#lo" x="429" y="435"/><use href="#dg" x="449" y="435"/><use href="#pl" x="469" y="435"/><use href="#pq" x="489" y="435"/><use href="#cn" x="509" y="435"/>
<use href="#cu" x="289" y="455"/><use href="#bv" x="309" y="455"/><use href="#dn" x="329" y="455"/><use href="#ns" x="349" y="455"/><use href="#ba" x="369" y="455"/><use href="#fc" x="389" y="455"/><use href="#sm" x="409" y="455"/><use href="#ht" x="429" y="455"/><use href="#lt" x="449" y="455"/><use href="#su" x="469" y="455"/><use href="#mo" x="489" y="455"/><use href="#cl" x="509" y="455"/>
<use href="#ar" x="289" y="475"/><use href="#bp" x="309" y="475"/><use href="#bc" x="329" y="475"/><use href="#lb" x="349" y="475"/><use href="#rb" x="369" y="475"/><use href="#lc" x="389" y="475"/><use href="#rs" x="409" y="475"/>
<use href="#ax" x="289" y="517"/><use href="#al" x="309" y="517"/><use href="#au" x="329" y="517"/><use href="#ad" x="349" y="517"/><use href="#lr" x="369" y="517"/><use href="#ud" x="389" y="517"/><use href="#qa" x="409" y="517"/><use href="#lu" x="429" y="517"/><use href="#be" x="449" y="517"/><use href="#ut" x="469" y="517"/><use href="#lf" x="489" y="517"/><use href="#bu" x="509" y="517"/>
<use href="#c1" x="289" y="537"/><use href="#c2" x="309" y="537"/><use href="#c3" x="329" y="537"/><use href="#c4" x="349" y="537"/><use href="#st" x="369" y="537"/><use href="#no" x="389" y="537"/><use href="#pn" x="409" y="537"/><use href="#cv2" x="429" y="537"/><use href="#rk" x="449" y="537"/><use href="#dk" x="469" y="537"/><use href="#lk" x="489" y="537"/><use href="#uk" x="509" y="537"/>
<use href="#uc" x="289" y="557"/><use href="#qc" x="309" y="557"/><use href="#ci" x="329" y="557"/>
<use href="#pl" x="289" y="598"/><use href="#mn" x="309" y="598"/><use href="#mx" x="329" y="598"/><use href="#dv" x="349" y="598"/><use href="#eq" x="369" y="598"/><use href="#ne" x="389" y="598"/>
<use href="#fp" x="289" y="641"/><use href="#rr" x="309" y="641"/><use href="#fd" x="329" y="641"/><use href="#pa" x="349" y="641"/><use href="#fq" x="369" y="641"/><use href="#fi" x="389" y="641"/><use href="#fo" x="409" y="641"/><use href="#fm" x="429" y="641"/><use href="#fe" x="449" y="641"/><use href="#fh" x="469" y="641"/><use href="#fn" x="489" y="641"/><use href="#fu" x="509" y="641"/>
<use href="#fc2" x="289" y="661"/><use href="#fs" x="309" y="661"/><use href="#fk" x="329" y="661"/><use href="#ft" x="349" y="661"/><use href="#fx" x="369" y="661"/><use href="#fy" x="389" y="661"/><use href="#fa" x="409" y="661"/><use href="#fb" x="429" y="661"/><use href="#fw" x="449" y="661"/><use href="#fv" x="469" y="661"/><use href="#fl" x="489" y="661"/><use href="#fg" x="509" y="661"/>
<use href="#fj" x="289" y="681"/><use href="#fz" x="309" y="681"/><use href="#f3" x="329" y="681"/><use href="#f4" x="349" y="681"/>
</g>
<g style="font-size:7px"><text x="489" y="418" class="m" style="font-size:8px;fill:#666">7</text><text x="509" y="418" class="m" style="font-size:8px;fill:#666">8</text><text x="289" y="438" class="m" style="font-size:7px;fill:#666">10</text><text x="309" y="438" class="m" style="font-size:7px;fill:#666">12</text></g>

<!-- red box 5 -->
<rect x="358" y="259" width="22" height="20" fill="#c6c6c6"/>
<rect x="361.500" y="262.500" width="15" height="12" fill="#fff" stroke="#444"/>
<rect x="355" y="256" width="28" height="26" rx="3" fill="none" stroke="#f00" stroke-width="6"/>
<!-- red box 2nd tab -->
<rect x="116.500" y="34.500" width="48.500" height="36" rx="3" fill="none" stroke="#f00" stroke-width="7"/>

<!-- numbered circles -->
<circle cx="90" cy="52" r="20" fill="#fff" filter="url(#gl)" opacity=".9"/><circle cx="90" cy="52" r="16.500" fill="#fff" fill-opacity=".85" stroke="#f00"/><text x="90" y="62" class="num">2</text>
<circle cx="151" cy="113" r="20" fill="#fff" filter="url(#gl)" opacity=".9"/><circle cx="151" cy="113" r="16.500" fill="#fff" fill-opacity=".85" stroke="#f00"/><text x="150" y="123" class="num">3</text>
<circle cx="248" cy="198" r="20" fill="#fff" filter="url(#gl)" opacity=".9"/><circle cx="248" cy="198" r="16.500" fill="#fff" fill-opacity=".85" stroke="#f00"/><text x="248" y="208" class="num">4</text>
<circle cx="370" cy="310" r="20" fill="#fff" filter="url(#gl)" opacity=".9"/><circle cx="370" cy="310" r="16.500" fill="#fff" fill-opacity=".85" stroke="#f00"/><text x="370" y="320" class="num">5</text>
</svg>
</body></html>
